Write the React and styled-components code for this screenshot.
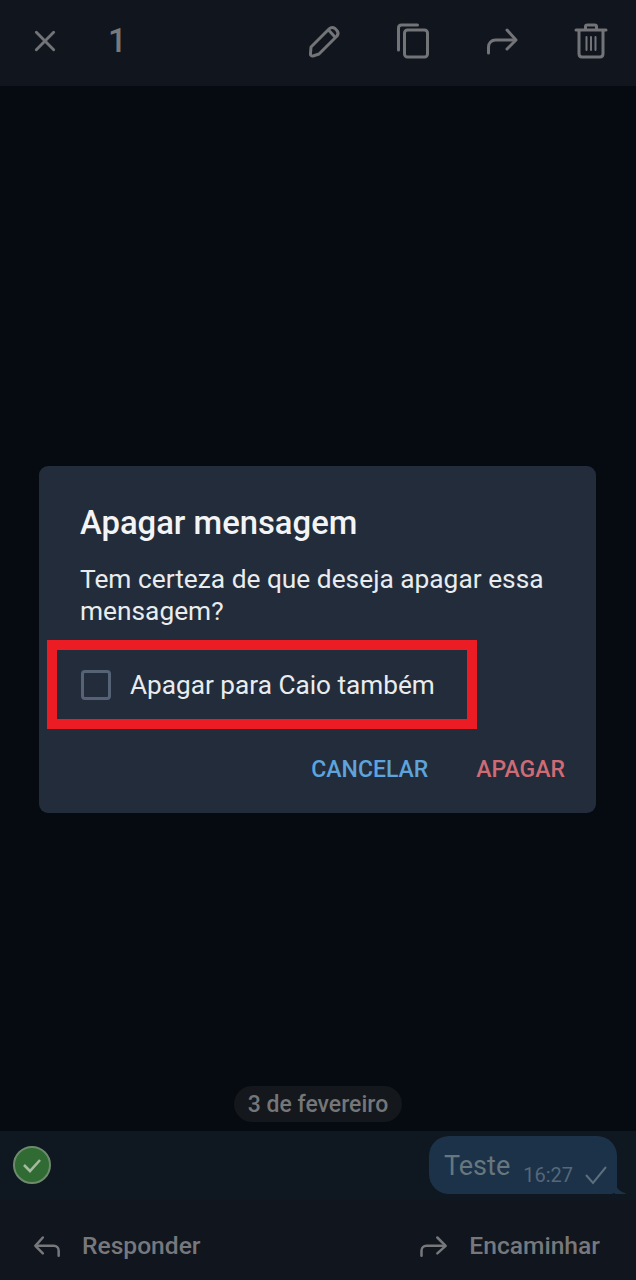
import React from "react";
import styled, { createGlobalStyle } from "styled-components";

const GlobalStyle = createGlobalStyle`
  html, body {
    margin: 0;
    padding: 0;
    background: #060a11;
  }
  * {
    box-sizing: border-box;
  }
`;

const Page = styled.div`
  position: relative;
  width: 636px;
  height: 1280px;
  display: flex;
  flex-direction: column;
  overflow: hidden;
  background: #060a11;
  font-family: Roboto, "Liberation Sans", sans-serif;
`;

const TopBar = styled.header`
  height: 86px;
  flex: none;
  display: flex;
  align-items: center;
  padding: 0 27px 5px 32px;
  background: #10151e;
  color: #737477;
`;

const Count = styled.span`
  margin-left: 50px;
  font-size: 33px;
  font-weight: 500;
  color: #77797b;
`;

const Actions = styled.div`
  margin-left: auto;
  display: flex;
  align-items: center;
  gap: 53px;
`;

const ChatArea = styled.main`
  flex: 1;
  display: flex;
  flex-direction: column;
  justify-content: flex-end;
`;

const DateRow = styled.div`
  display: flex;
  justify-content: center;
  padding-bottom: 9px;
`;

const DatePill = styled.span`
  height: 36px;
  padding: 0 14px;
  display: flex;
  align-items: center;
  border-radius: 18px;
  background: #14171c;
  color: #747678;
  font-size: 23px;
  font-weight: 500;
`;

const MessageRow = styled.div`
  height: 69px;
  display: flex;
  align-items: center;
  justify-content: space-between;
  padding: 0 19px 1px 13px;
  background: #0f1720;
`;

const Tick = styled.span`
  width: 38px;
  height: 38px;
  display: flex;
  align-items: center;
  justify-content: center;
  border-radius: 50%;
  border: 2px solid #6d8a6c;
  background: #2f6b32;
`;

const Bubble = styled.div`
  position: relative;
  width: 188px;
  height: 58px;
  display: flex;
  padding: 15px 0 0 15px;
  border-radius: 20px 20px 6px 20px;
  background: #1c3248;
  color: #66777f;
`;

const BubbleTail = styled.svg`
  position: absolute;
  right: -10px;
  bottom: 0;
`;

const BubbleText = styled.span`
  font-size: 27px;
  line-height: 30px;
`;

const BubbleMeta = styled.span`
  display: flex;
  align-items: center;
  gap: 11px;
  margin: 12px 0 0 13px;
  height: 24px;
  font-size: 20px;
  color: #566778;
`;

const BottomBar = styled.footer`
  height: 80px;
  flex: none;
  display: flex;
  align-items: center;
  justify-content: space-between;
  padding: 10px 36px 0 32px;
  background: #10151e;
`;

const BottomAction = styled.div`
  display: flex;
  align-items: center;
  gap: 20px;
  color: #77787c;
  font-size: 24.6px;
  font-weight: 500;
`;

const Overlay = styled.div`
  position: absolute;
  inset: 0;
  display: flex;
  align-items: center;
  justify-content: center;
  padding: 0 1px 1px 0;
`;

const Dialog = styled.section`
  width: 557px;
  height: 347px;
  padding-top: 37px;
  border-radius: 9px;
  background: #222c3a;
`;

const Title = styled.h2`
  margin: 0 0 0 41px;
  font-size: 32.8px;
  line-height: 40px;
  font-weight: 500;
  color: #f2f4f6;
`;

const Body = styled.p`
  margin: 20px 30px 0 41px;
  font-size: 26.3px;
  line-height: 32px;
  color: #e9ecef;
`;

const HighlightRow = styled.label`
  width: 430px;
  height: 89px;
  margin: 13px 0 0 8px;
  display: flex;
  align-items: center;
  padding-left: 24px;
  border: 10px solid #ec1c24;
  color: #e9ecef;
  font-size: 26.2px;
`;

const Checkbox = styled.span`
  width: 30px;
  height: 30px;
  flex: none;
  margin-right: 19px;
  border: 3px solid #566377;
  border-radius: 4px;
`;

const Buttons = styled.div`
  display: flex;
  justify-content: flex-end;
  gap: 48px;
  padding: 27px 31px 0 0;
`;

const TextButton = styled.button`
  padding: 0;
  border: 0;
  background: none;
  font-family: inherit;
  font-size: 23px;
  line-height: 28px;
  font-weight: 500;
  color: ${(p) => p.$color};
`;

const IconSvg = ({ size = 36, children, sw = 3 }) => (
  <svg
    width={size}
    height={size}
    viewBox="0 0 36 36"
    fill="none"
    stroke="currentColor"
    strokeWidth={sw}
    strokeLinecap="round"
    strokeLinejoin="round"
  >
    {children}
  </svg>
);

const App = () => {
  return (
    <>
      <GlobalStyle />
      <Page>
        <TopBar>
          <IconSvg size={26} sw={4}>
            <path d="M6 6l24 24M30 6L6 30" />
          </IconSvg>
          <Count>1</Count>
          <Actions>
            <IconSvg>
              <path d="M5 24L23 6c2-2 4-2 6-.5l1.500 1.500c2 2 2 4 .5 6L13 31l-6 2c-1.500.4-3-1-2.500-2.500z" />
              <path d="M22.500 7l6.500 7" />
            </IconSvg>
            <IconSvg>
              <rect x="9.500" y="7" width="23" height="27" rx="3" />
              <path d="M3.500 27V5c0-2 1-3 3-3h16" />
            </IconSvg>
            <IconSvg>
              <path d="M4.500 30v-6c0-4 3-7 7-7H31" />
              <path d="M23 7l9 10-9 9" />
            </IconSvg>
            <IconSvg>
              <path d="M3 7h30" />
              <path d="M12.500 6V3.500C12.500 2.500 13.500 2 14.500 2h7c1 0 2 .5 2 1.500V6" />
              <path d="M6 8v22.500c0 2 1 3.500 3 3.500h18c2 0 3-1.500 3-3.500V8" />
              <path d="M13.500 14v13M18 14v13M22.500 14v13" strokeWidth="2" />
            </IconSvg>
          </Actions>
        </TopBar>
        <ChatArea>
          <DateRow>
            <DatePill>3 de fevereiro</DatePill>
          </DateRow>
          <MessageRow>
            <Tick>
              <svg width="22" height="22" viewBox="0 0 22 22" fill="none" stroke="#a5bb9f" strokeWidth="2.600">
                <path d="M3 11l6 6 10-11" />
              </svg>
            </Tick>
            <Bubble>
              <BubbleText>Teste</BubbleText>
              <BubbleMeta>
                16:27
                <svg width="24" height="20" viewBox="0 0 24 20" fill="none" stroke="#5d6e7e" strokeWidth="2">
                  <path d="M2 10l7 8L22 2" />
                </svg>
              </BubbleMeta>
              <BubbleTail width="12" height="12" viewBox="0 0 12 12">
                <path d="M0 0c1 6 4 9 10 11 1 .4 1 1 0 1H0z" fill="#1c3248" />
              </BubbleTail>
            </Bubble>
          </MessageRow>
        </ChatArea>
        <BottomBar>
          <BottomAction>
            <IconSvg size={30}>
              <path d="M32 31v-6c0-3.500-2.500-6-6-6H5" />
              <path d="M13 9l-9 10 9 9" />
            </IconSvg>
            Responder
          </BottomAction>
          <BottomAction>
            <IconSvg size={30}>
              <path d="M3 31v-6c0-3.500 2.500-6 6-6h22" />
              <path d="M22 9l10 10-10 9" />
            </IconSvg>
            Encaminhar
          </BottomAction>
        </BottomBar>
        <Overlay>
          <Dialog>
            <Title>Apagar mensagem</Title>
            <Body>Tem certeza de que deseja apagar essa mensagem?</Body>
            <HighlightRow>
              <Checkbox />
              Apagar para Caio também
            </HighlightRow>
            <Buttons>
              <TextButton $color="#5ea3db">CANCELAR</TextButton>
              <TextButton $color="#cf6b74">APAGAR</TextButton>
            </Buttons>
          </Dialog>
        </Overlay>
      </Page>
    </>
  );
};

export default App;
